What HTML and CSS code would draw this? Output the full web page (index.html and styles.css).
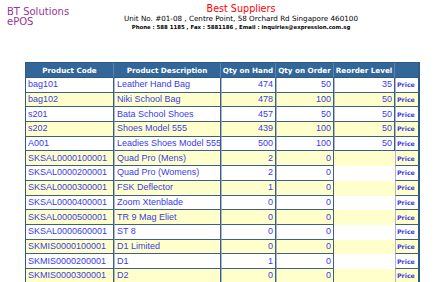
FILE: index.html
```html
<!DOCTYPE html>
<html>
<head>
<meta charset="utf-8">
<link rel="stylesheet" href="styles.css">
</head>
<body>
<div class="top">
  <div class="brand">BT Solutions<br>ePOS</div>
  <div class="company">
    <div class="name">Best Suppliers</div>
    <div class="addr">Unit No. #01-08 , Centre Point, 58 Orchard Rd Singapore 460100</div>
    <div class="contact">Phone : 588 1185 , Fax : 5881186 , Email : inquiries@expression.com.sg</div>
  </div>
</div>
<table class="grid">
  <colgroup>
    <col class="c1"><col class="c2"><col class="c3"><col class="c4"><col class="c5"><col class="c6">
  </colgroup>
  <thead>
    <tr><th>Product Code</th><th>Product Description</th><th>Qty on Hand</th><th>Qty on Order</th><th>Reorder Level</th><th></th></tr>
  </thead>
  <tbody>
    <tr class="odd"><td>bag101</td><td>Leather Hand Bag</td><td class="num">474</td><td class="num">50</td><td class="num">35</td><td class="price">Price</td></tr>
    <tr class="even"><td>bag102</td><td>Niki School Bag</td><td class="num">478</td><td class="num">100</td><td class="num">50</td><td class="price">Price</td></tr>
    <tr class="odd"><td>s201</td><td>Bata School Shoes</td><td class="num">457</td><td class="num">50</td><td class="num">50</td><td class="price">Price</td></tr>
    <tr class="even"><td>s202</td><td>Shoes Model 555</td><td class="num">439</td><td class="num">100</td><td class="num">50</td><td class="price">Price</td></tr>
    <tr class="odd"><td>A001</td><td>Leadies Shoes Model 555</td><td class="num">500</td><td class="num">100</td><td class="num">50</td><td class="price">Price</td></tr>
    <tr class="even"><td>SKSAL0000100001</td><td>Quad Pro (Mens)</td><td class="num">2</td><td class="num">0</td><td class="empty"></td><td class="price">Price</td></tr>
    <tr class="odd"><td>SKSAL0000200001</td><td>Quad Pro (Womens)</td><td class="num">2</td><td class="num">0</td><td class="empty"></td><td class="price">Price</td></tr>
    <tr class="even"><td>SKSAL0000300001</td><td>FSK Deflector</td><td class="num">1</td><td class="num">0</td><td class="empty"></td><td class="price">Price</td></tr>
    <tr class="odd"><td>SKSAL0000400001</td><td>Zoom Xtenblade</td><td class="num">0</td><td class="num">0</td><td class="empty"></td><td class="price">Price</td></tr>
    <tr class="even"><td>SKSAL0000500001</td><td>TR 9 Mag Eliet</td><td class="num">0</td><td class="num">0</td><td class="empty"></td><td class="price">Price</td></tr>
    <tr class="odd"><td>SKSAL0000600001</td><td>ST 8</td><td class="num">0</td><td class="num">0</td><td class="empty"></td><td class="price">Price</td></tr>
    <tr class="even"><td>SKMIS0000100001</td><td>D1 Limited</td><td class="num">0</td><td class="num">0</td><td class="empty"></td><td class="price">Price</td></tr>
    <tr class="odd"><td>SKMIS0000200001</td><td>D1</td><td class="num">1</td><td class="num">0</td><td class="empty"></td><td class="price">Price</td></tr>
    <tr class="even"><td>SKMIS0000300001</td><td>D2</td><td class="num">0</td><td class="num">0</td><td class="empty"></td><td class="price">Price</td></tr>
  </tbody>
</table>
</body>
</html>
```

FILE: styles.css
```css
html, body {
  margin: 0;
  padding: 0;
  background: #ffffff;
}

body {
  font-family: "DejaVu Sans", Verdana, sans-serif;
  overflow: hidden;
}

.top {
  display: flex;
  padding: 4px 8px 0 7px;
  height: 62px;
  box-sizing: border-box;
}

.brand {
  width: 45px;
  flex: none;
  color: #993399;
  font-size: 10px;
  line-height: 10px;
  padding-top: 2.5px;
  white-space: nowrap;
}

.company {
  flex: 1;
  text-align: center;
}

.name {
  color: #ff0000;
  font-size: 9.6px;
  line-height: 10px;
}

.addr {
  color: #000000;
  font-size: 7.2px;
  line-height: 8px;
  margin-top: 1px;
  white-space: nowrap;
}

.contact {
  color: #000000;
  font-size: 5.4px;
  font-weight: bold;
  line-height: 7px;
  margin-top: 1px;
  white-space: nowrap;
}

.grid {
  margin-left: 25px;
  width: 392px;
  table-layout: fixed;
  border-collapse: separate;
  border-spacing: 0;
  border: 1px solid #2f5a84;
  border-right-width: 2px;
  font-family: "Liberation Sans", Arial, sans-serif;
}

.c1 { width: 88px; }
.c2 { width: 107px; }
.c3 { width: 55px; }
.c4 { width: 58px; }
.c5 { width: 61px; }
.c6 { width: 23px; }

.grid th {
  background: #336699;
  color: #ffffff;
  font-family: "DejaVu Sans", Verdana, sans-serif;
  font-weight: bold;
  font-size: 7.2px;
  height: 15px;
  padding: 0;
  white-space: nowrap;
  text-align: center;
  border-right: 1px solid #5d85ad;
  border-bottom: 1px solid #2f5a84;
  box-sizing: border-box;
}

.grid th:last-child {
  border-right: none;
}

.grid td {
  height: 14.7px;
  box-sizing: border-box;
  padding: 0 1px 0 2px;
  font-size: 9px;
  line-height: 11px;
  color: #3b3bea;
  white-space: nowrap;
  border-left: 1px solid #a9b9c9;
  border-right: 1px solid #3d5f80;
  border-bottom: 1px solid #3d5f80;
}

.grid td:first-child {
  border-left: none;
}

.grid td:last-child {
  border-right: none;
}

.grid tr.odd td { background: #ffffff; }
.grid tr.even td { background: #ffffcc; }

.grid td.num {
  text-align: right;
  padding-right: 2px;
}

.grid td.price {
  font-family: "DejaVu Sans", Verdana, sans-serif;
  font-weight: bold;
  font-size: 6.3px;
  padding: 0 0 0 1px;
}

.grid td.empty {
  border-left: none;
  border-right: none;
  border-bottom: none;
}
```
